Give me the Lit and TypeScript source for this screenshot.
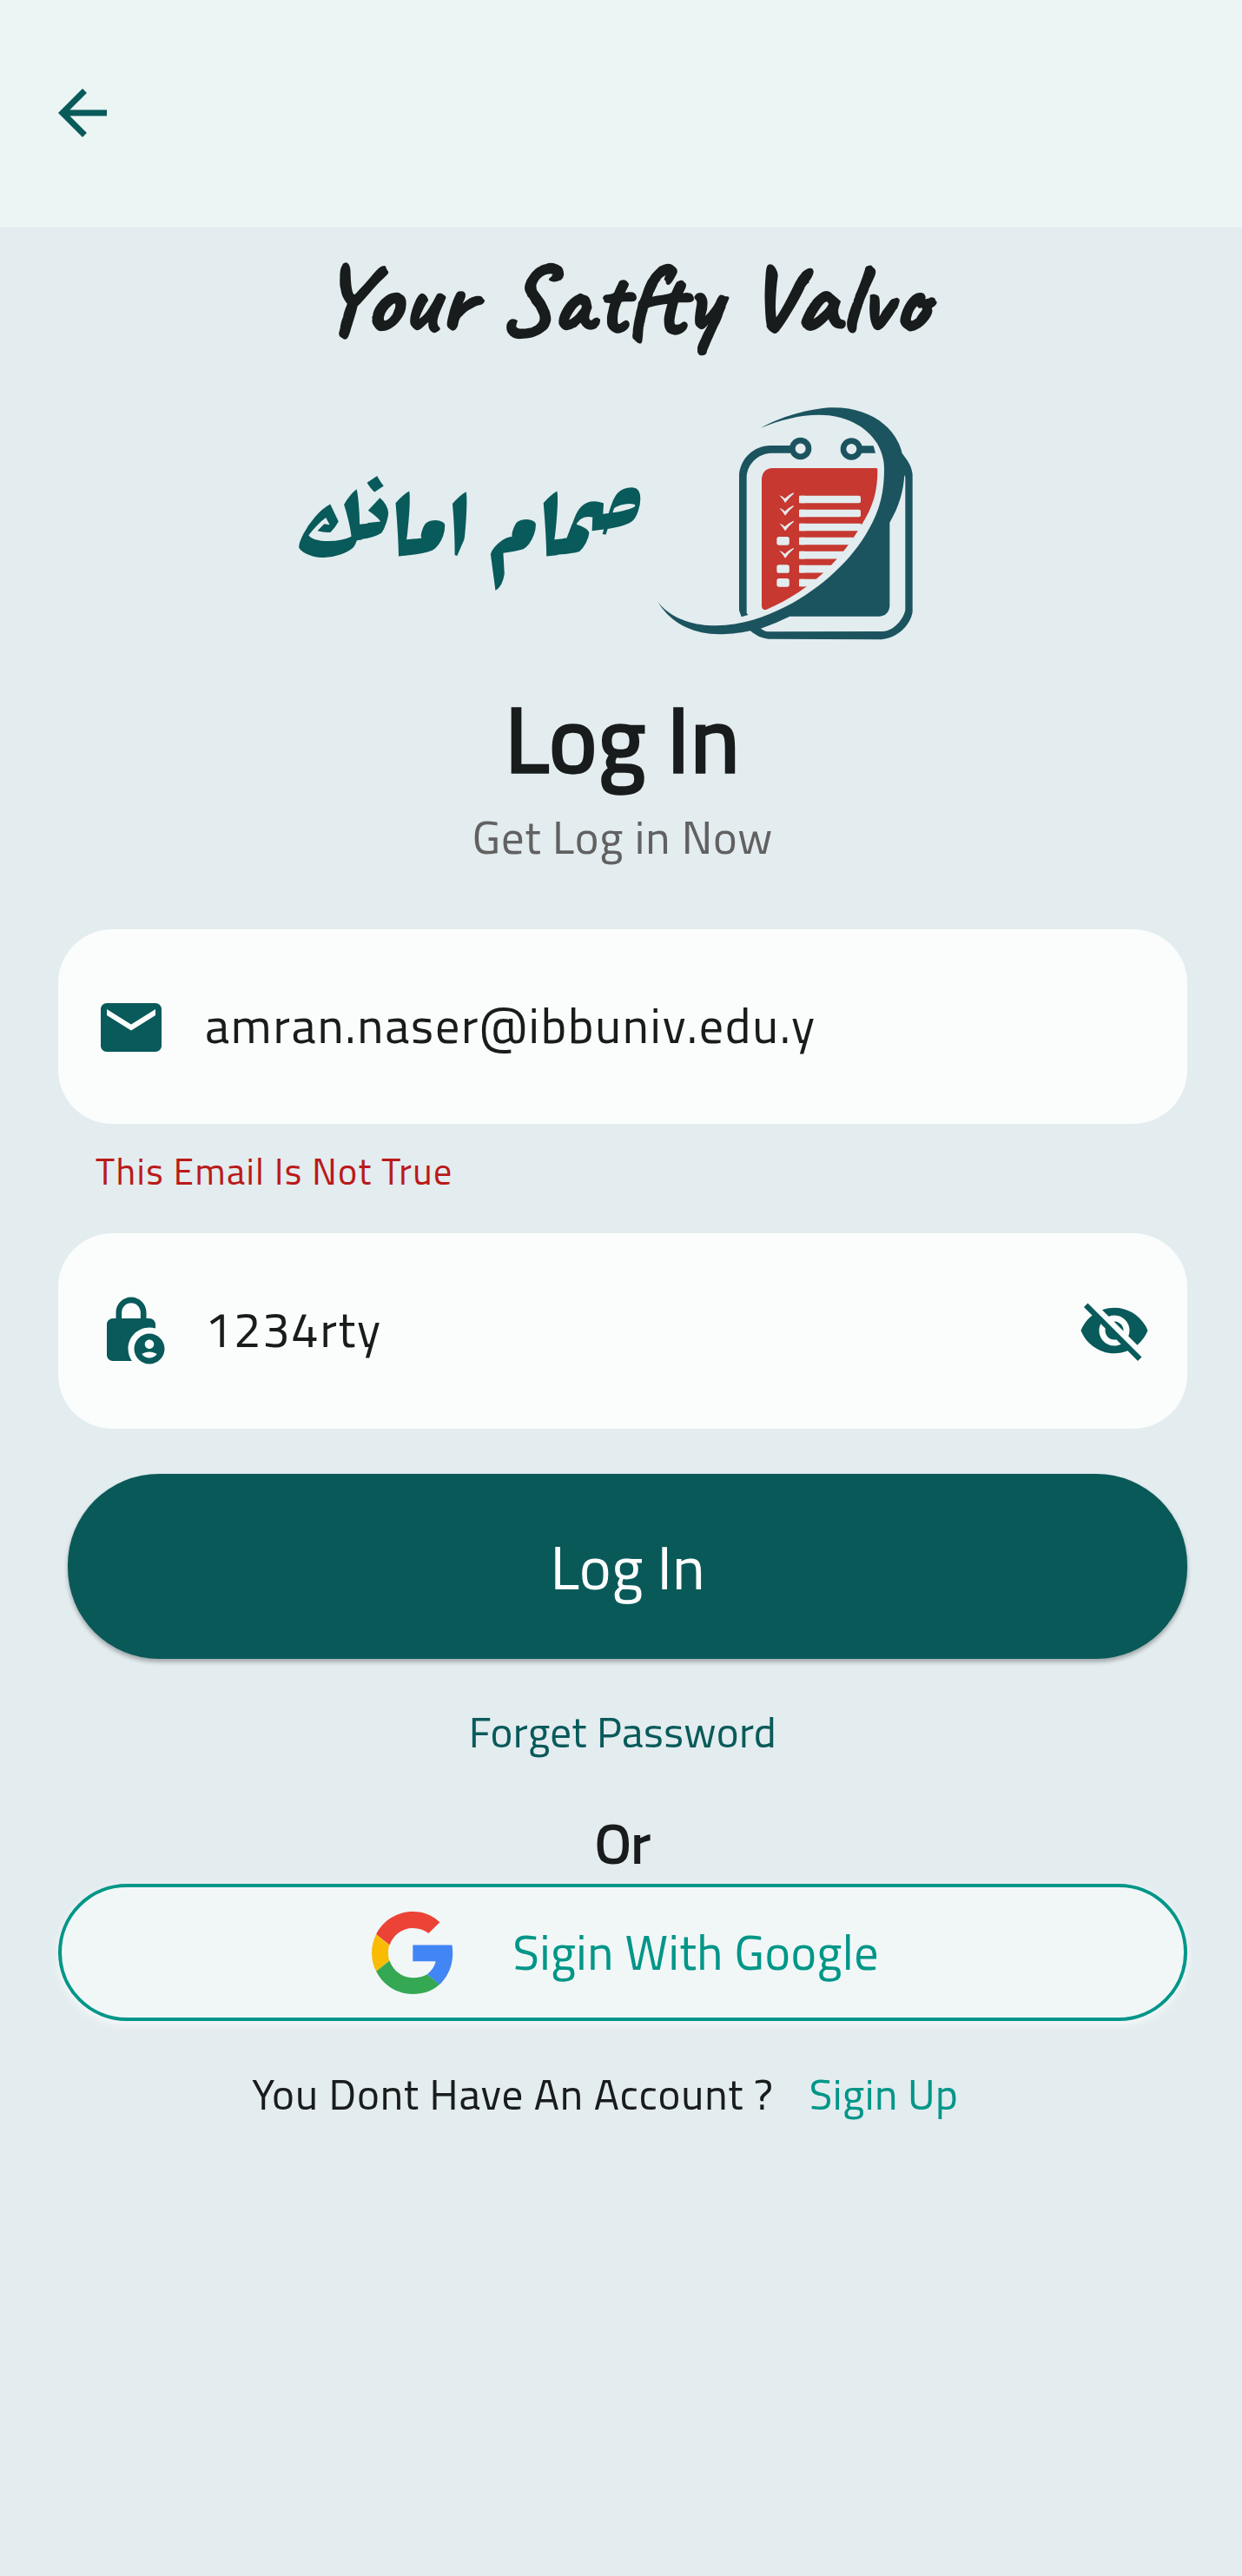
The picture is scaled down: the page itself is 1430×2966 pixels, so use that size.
import { LitElement, html, css, svg } from "lit";
import { customElement, property, state } from "lit/decorators.js";

const ICONS = {
  back: svg`<path d="M20 11H7.83l5.59-5.59L12 4l-8 8 8 8 1.41-1.41L7.83 13H20v-2z"/>`,
  mail: svg`<path d="M20 4H4c-1.1 0-1.99.9-1.99 2L2 18c0 1.1.9 2 2 2h16c1.1 0 2-.9 2-2V6c0-1.1-.9-2-2-2zm0 4l-8 5-8-5V6l8 5 8-5v2z"/>`,
  lock: svg`<path d="M18 11c.7 0 1.37.1 2 .29V10c0-1.1-.9-2-2-2h-1V6c0-2.76-2.24-5-5-5S7 3.24 7 6v2H6c-1.1 0-2 .9-2 2v10c0 1.1.9 2 2 2h6.26C11.47 20.87 11 19.49 11 18c0-3.87 3.13-7 7-7zM8.9 6c0-1.71 1.39-3.1 3.1-3.1s3.1 1.39 3.1 3.1v2H8.9V6z"/><path d="M18 13c-2.76 0-5 2.24-5 5s2.24 5 5 5 5-2.24 5-5-2.24-5-5-5zm0 2c.83 0 1.5.67 1.5 1.5S18.83 18 18 18s-1.5-.67-1.5-1.5.67-1.5 1.5-1.5zm0 6c-1.03 0-1.94-.52-2.48-1.32C16.25 19.26 17.09 19 18 19s1.75.26 2.48.68c-.54.8-1.45 1.32-2.48 1.32z"/>`,
  eyeOff: svg`<path d="M12 7c2.76 0 5 2.24 5 5 0 .65-.13 1.26-.36 1.83l2.92 2.92c1.51-1.26 2.7-2.89 3.43-4.75-1.73-4.39-6-7.5-11-7.5-1.4 0-2.74.25-3.98.7l2.16 2.16C10.74 7.13 11.35 7 12 7zM2 4.27l2.28 2.28.46.46C3.08 8.3 1.78 10.02 1 12c1.73 4.39 6 7.5 11 7.5 1.55 0 3.03-.3 4.38-.84l.42.42L19.73 22 21 20.73 3.27 3 2 4.27zM7.53 9.8l1.55 1.55c-.05.21-.08.43-.08.65 0 1.66 1.34 3 3 3 .22 0 .44-.03.65-.08l1.55 1.55c-.67.33-1.41.53-2.2.53-2.76 0-5-2.24-5-5 0-.79.2-1.53.53-2.2zm4.31-.78l3.15 3.15.02-.16c0-1.66-1.34-3-3-3l-.17.01z"/>`,
};

@customElement("md-icon")
export class MdIcon extends LitElement {
  @property() name: keyof typeof ICONS = "back";

  static styles = css`
    :host { display: block; flex: none; width: 84px; height: 84px; color: #095a5a; }
    .glyph { display: block; width: 100%; height: 100%; fill: currentColor; }
  `;

  render() {
    return html`<svg class="glyph" viewBox="0 0 24 24">${ICONS[this.name]}</svg>`;
  }
}

/* Clipboard emblem: checklist sheet wrapped by a swoosh. */
@customElement("clipboard-emblem")
export class ClipboardEmblem extends LitElement {
  static styles = css`
    :host { display: block; flex: none; width: 340px; height: 300px; }
    .art { display: block; width: 100%; height: 100%; }
    .ink { fill: #1b545f; }
    .ring { fill: none; stroke: #1b545f; stroke-width: 20; }
    .sheet { fill: #c63830; }
    .paper { fill: #e3ecef; }
  `;

  render() {
    const bars = [362, 410, 458, 506, 554.5, 602.5, 650];
    const widths = [213, 213, 216, 190, 160, 115, 64];
    const ticks = [0, 44, 97, 191];
    const boxes = [504, 600.5, 648];
    return html`
      <svg class="art" viewBox="0 0 1020 900">
        <path class="sheet" d="M411 305Q413 269 449 267L807 267Q811 267 811 272C812 345 795 402 755 464C690 575 590 685 428 755Q413 760 411 744Z"/>
        ${bars.map((y, i) => svg`<rect class="paper" x="540" y=${y} width=${widths[i]} height="26" rx="6"/><rect class="paper" x="540" y=${y} width="20" height="26" rx="2"/>`)}
        ${ticks.map((dy) => svg`<path class="paper" transform="translate(0 ${dy})" d="M472 361Q482 363 491 372Q503 360 520 352Q523 352 521 356Q506 368 492 387Q485 374 472 361Z"/>`)}
        ${boxes.map((y) => svg`<rect class="paper" x="463" y=${y} width="43.5" height="29" rx="8"/>`)}
        <path class="ink" d="M333 290C338 232 385 190 440 189L510 189L510 215L443 215C398 217 362 252 359 296L359 767L364 774L341 781L333 758Z"/>
        <circle class="ring" cx="545" cy="199.500" r="28"/>
        <circle class="ring" cx="721" cy="201" r="28"/>
        <path class="ink" d="M752 190L797 190L804 215L752 215Z"/>
        <path class="ink" fill-rule="evenodd" d="M408 128C495 80 600 58 660 58C785 58 875 125 896 216C915 240 930 262 932 290L932 765C922 815 875 858 815 859L435 857C410 855 390 845 372 829C330 838 290 841 265 841C170 841 95 800 52 729C100 790 180 812 255 811C340 810 420 783 495 745C620 680 725 580 780 480C820 410 834 350 834 270C834 160 735 83 610 83C540 83 475 101 408 128ZM904 291C900 350 885 400 853 455L853 745Q850 775 820 779L508 779Q460 803 408 821Q420 832 440 832L830 831C865 830 900 792 907 757L907 300Q905 290 904 291Z"/>
      </svg>
    `;
  }
}

@customElement("google-mark")
export class GoogleMark extends LitElement {
  static styles = css`
    :host { display: block; flex: none; width: 95px; height: 95px; }
    .mark { display: block; width: 100%; height: 100%; }
    .red { fill: #eb4335; }
    .blue { fill: #4285f4; }
    .yellow { fill: #fabb05; }
    .green { fill: #34a853; }
  `;

  render() {
    return html`
      <svg class="mark" viewBox="0 0 48 48">
        <path class="red" d="M23.900 9.600c3.500 0 6.600 1.100 9.200 3.050l6.500-6.500C35.500 2.300 30.300 0 23.900 0 14.500 0 6.500 5.380 2.560 13.220l7.880 6.190C12.400 13.720 17.640 9.600 23.900 9.600z"/>
        <path class="yellow" d="M10.200 28.590c-.48-1.450-.6-2.990-.6-4.590s.12-3.140.6-4.590l-7.640-6.190C.92 16.460 0 20.120 0 24c0 3.880.92 7.540 2.560 10.780z"/>
        <path class="green" d="M23.900 48c6.480 0 11.930-2.130 15.700-5.810l-7.400-5.700c-2.250 1.400-5.060 2-8.300 2-6.260 0-11.570-4.220-13.570-9.910L2.560 34.780C6.510 42.620 14.500 48 23.900 48z"/>
        <path class="blue" d="M46.700 19.500H23.900v9.400h13.300c-.6 2.900-2.400 5.600-5 7.590l7.400 5.800c4.510-4.180 7.500-10.500 7.500-17.890 0-1.600-.1-3.400-.4-4.900z"/>
      </svg>
    `;
  }
}

@customElement("app-root")
export class AppRoot extends LitElement {
  @state() private email = "amran.naser@ibbuniv.edu.y";
  @state() private password = "1234rty";

  static styles = css`
    :host {
      display: block;
      min-height: 2966px;
      background: #e3ecef;
      color: #191c1c;
      font-family: "Cairo", "Titillium Web", "Open Sans", sans-serif;
      font-weight: 400;
      white-space: nowrap;
    }
    .topbar {
      box-sizing: border-box;
      height: 261.500px;
      padding: 88px 53px 0;
      background: #eaf5f4;
    }
    .content {
      display: flex;
      flex-direction: column;
      padding: 12px 63px 0 67px;
    }
    .brand {
      padding-left: 4px;
      text-align: center;
      font: 700 112.500px/140px "Caveat", "Open Sans", cursive;
      font-feature-settings: "liga" 1, "clig" 1, "calt" 1;
      letter-spacing: 1.820px;
      -webkit-text-stroke: 2.400px #191c1c;
      paint-order: stroke fill;
    }
    .logo {
      display: flex;
      height: 300px;
      margin-top: 36.500px;
      padding-left: 276px;
    }
    .logo-name {
      width: 399px;
      margin-right: -2px;
      direction: rtl;
      font: 400 124.300px/305px "Rakkas", "Aref Ruqaa", "DejaVu Sans", serif;
      word-spacing: 2px;
      color: #095a5a;
    }
    .title {
      margin-top: 26.600px;
      text-align: center;
      font-size: 105px;
      line-height: 148px;
      letter-spacing: 1.050px;
      -webkit-text-stroke: 3.300px #191c1c;
      paint-order: stroke fill;
    }
    .subtitle {
      text-align: center;
      font-size: 52.500px;
      line-height: 78px;
      letter-spacing: 0.875px;
      color: #616161;
    }
    .field {
      box-sizing: border-box;
      display: flex;
      align-items: center;
      height: 224.300px;
      padding: 0 42px;
      border-radius: 62px;
      background: #fbfdfc;
    }
    .email { margin-top: 67.400px; padding-top: 1px; }
    .value {
      flex: 1;
      padding: 0 0 3px 43px;
      font-size: 56px;
      line-height: 100px;
      letter-spacing: 1.750px;
    }
    .error {
      margin: 24.300px 0 41.700px;
      padding-left: 43px;
      font-size: 42px;
      line-height: 60px;
      letter-spacing: 1.400px;
      color: #ba1a1a;
    }
    .primary {
      box-sizing: border-box;
      display: flex;
      align-items: center;
      justify-content: center;
      height: 213.300px;
      margin: 52.300px 0 0 10.500px;
      padding: 2px 0 0 1px;
      border-radius: 105px;
      background: #095959;
      box-shadow: 0 3.500px 5px rgba(0, 0, 0, 0.3);
      color: #fbfdfc;
      font-size: 70px;
      letter-spacing: 0.350px;
    }
    .forgot {
      margin-top: 44px;
      text-align: center;
      font-size: 49px;
      line-height: 80px;
      letter-spacing: 0.400px;
      color: #095a5a;
    }
    .or {
      margin: 43px 0 2px;
      text-align: center;
      font-size: 63px;
      line-height: 90px;
      letter-spacing: 0.400px;
      -webkit-text-stroke: 2px #191c1c;
      paint-order: stroke fill;
    }
    .google {
      box-sizing: border-box;
      display: flex;
      align-items: center;
      gap: 67.600px;
      height: 158px;
      padding-left: 357px;
      border: 4px solid #009688;
      border-radius: 79px;
      background: #f1f7f7;
      box-shadow: 0 4px 12px rgba(255, 255, 255, 0.75);
      color: #009688;
      font-size: 56px;
      letter-spacing: 0.400px;
    }
    .google-label { padding-bottom: 2px; }
    .signup {
      display: flex;
      gap: 41px;
      margin-top: 44px;
      padding-left: 223px;
      font-size: 49px;
      line-height: 80px;
      letter-spacing: 0.875px;
    }
    .link { color: #009688; letter-spacing: 0.440px; }
  `;

  render() {
    return html`
      <header class="topbar"><md-icon name="back"></md-icon></header>
      <main class="content">
        <div class="brand">Your Satfty Valvo</div>
        <div class="logo">
          <div class="logo-name" lang="ar">صمام امانك</div>
          <clipboard-emblem></clipboard-emblem>
        </div>
        <div class="title">Log In</div>
        <div class="subtitle">Get Log in Now</div>
        <div class="field email">
          <md-icon name="mail"></md-icon>
          <span class="value">${this.email}</span>
        </div>
        <div class="error">This Email Is Not True</div>
        <div class="field">
          <md-icon name="lock"></md-icon>
          <span class="value">${this.password}</span>
          <md-icon name="eyeOff"></md-icon>
        </div>
        <div class="primary" role="button">Log In</div>
        <div class="forgot">Forget Password</div>
        <div class="or">Or</div>
        <div class="google" role="button">
          <google-mark></google-mark>
          <span class="google-label">Sigin With Google</span>
        </div>
        <div class="signup">
          <span>You Dont Have An Account ?</span>
          <span class="link">Sigin Up</span>
        </div>
      </main>
    `;
  }
}
